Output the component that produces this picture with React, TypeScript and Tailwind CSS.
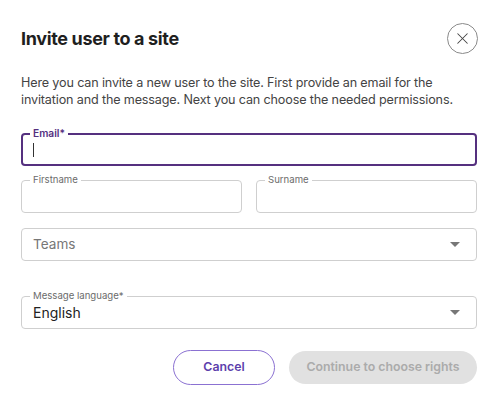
import { X } from "lucide-react";

function Outlined({
  label,
  focused = false,
  children,
  className = "",
}: {
  label?: string;
  focused?: boolean;
  children?: React.ReactNode;
  className?: string;
}) {
  return (
    <div
      className={`relative flex h-[33px] items-center rounded-[4px] ${
        focused ? "border-2 border-[#55307f] px-[10px]" : "border border-[#cfcfcf] px-[11px]"
      } ${className}`}
    >
      {label && (
        <span
          className={`absolute bg-white px-[3px] leading-[12px] ${
            focused
              ? "left-[7px] top-[-8px] text-[10.2px] font-semibold text-[#55307f]"
              : "left-[8px] top-[-7px] text-[9.6px] text-[#6b6b6b]"
          }`}
        >
          {label}
        </span>
      )}
      {children}
    </div>
  );
}

function Caret() {
  return (
    <svg width="10" height="5" viewBox="0 0 10 5" className="ml-auto mr-[5px]">
      <path d="M0 0h10L5 5z" fill="#777" />
    </svg>
  );
}

export default function App() {
  return (
    <div
      className="h-[406px] w-[498px] bg-white px-[21px] pt-[23px]"
      style={{ fontFamily: "Inter, 'Noto Sans', sans-serif" }}
    >
      <div className="flex items-center justify-between">
        <h1 className="text-[18px] font-bold tracking-[-0.35px] text-[#1f1f1f]">Invite user to a site</h1>
        <button className="mr-[-1px] flex h-[31px] w-[31px] items-center justify-center rounded-full border border-[#8a8a8a] text-[#444]">
          <X size={19} strokeWidth={1.3} />
        </button>
      </div>

      <p className="mt-[20px] text-[12.6px] leading-[17px] tracking-[-0.15px] text-[#444]">
        Here you can invite a new user to the site. First provide an email for the invitation and the message. Next you
        can choose the needed permissions.
      </p>

      <div className="mt-[25px] flex flex-col">
        <Outlined label="Email*" focused>
          <span className="h-[14px] w-px bg-[#333]" />
        </Outlined>

        <div className="mt-[14px] grid grid-cols-2 gap-[14px]">
          <Outlined label="Firstname" />
          <Outlined label="Surname" />
        </div>

        <Outlined className="mt-[15px]">
          <span className="text-[13.6px] text-[#777]">Teams</span>
          <Caret />
        </Outlined>

        <Outlined label="Message language*" className="mt-[35px]">
          <span className="text-[14px] text-[#222]">English</span>
          <Caret />
        </Outlined>

        <div className="mt-[21px] flex justify-end gap-[14px]">
          <button className="h-[35px] w-[102px] rounded-full border border-[#8b71d2] text-[12.3px] font-semibold text-[#5d3fac]">
            Cancel
          </button>
          <button className="h-[33px] w-[188px] self-center rounded-full bg-[#e1e1e1] text-[12.3px] font-semibold text-[#ababab]">
            Continue to choose rights
          </button>
        </div>
      </div>
    </div>
  );
}
